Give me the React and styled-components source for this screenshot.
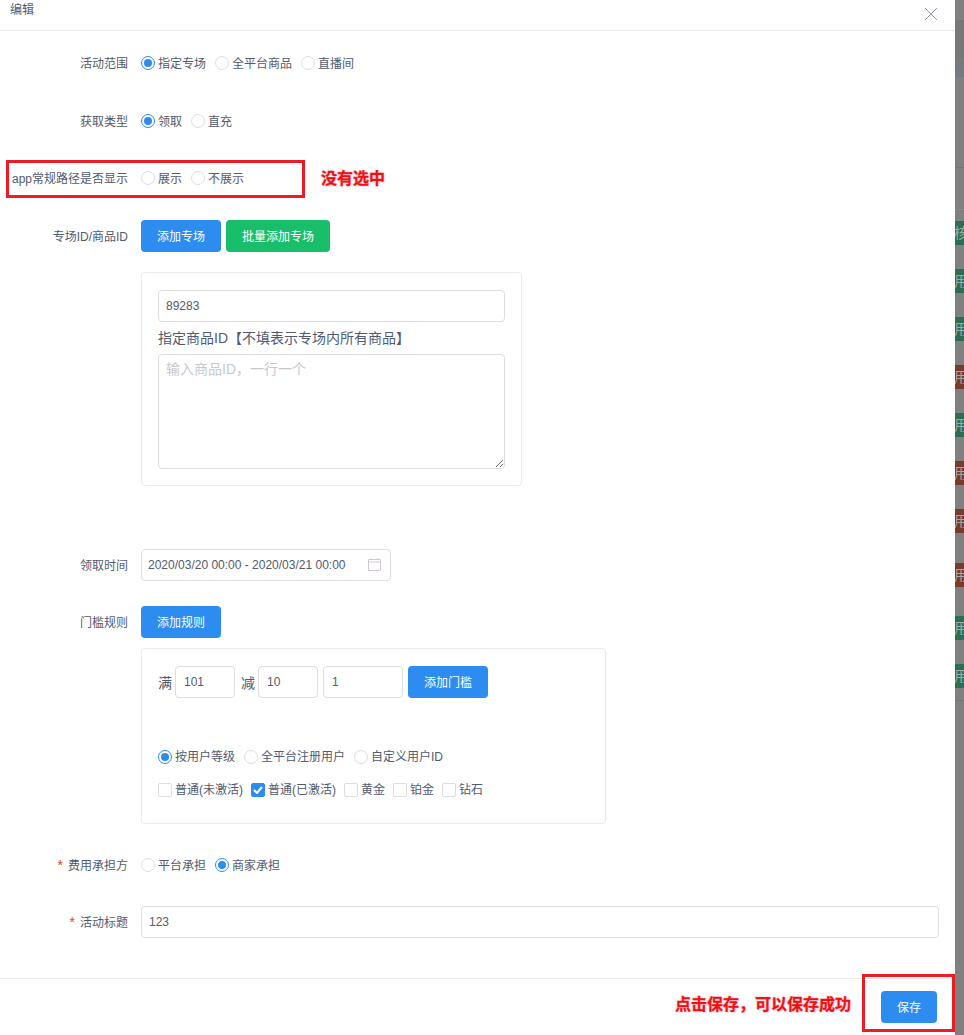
import styled, { createGlobalStyle } from "styled-components";

const stripTags = [
  { text: "核", color: "#2c6e4f", top: 48 },
  { text: "用", color: "#2c6e4f", top: 24 },
  { text: "用", color: "#2c6e4f", top: 24 },
  { text: "用", color: "#7c3a29", top: 24 },
  { text: "用", color: "#2c6e4f", top: 24 },
  { text: "用", color: "#7c3a29", top: 24 },
  { text: "用", color: "#7c3a29", top: 24 },
  { text: "用", color: "#7c3a29", top: 30 },
  { text: "用", color: "#2c6e4f", top: 29 },
  { text: "用", color: "#2c6e4f", top: 24 },
];

function Radio({ label, checked }) {
  return (
    <RadioLabel>
      <RadioDot $checked={checked} />
      <OptionText>{label}</OptionText>
    </RadioLabel>
  );
}

function Check({ label, checked }) {
  return (
    <RadioLabel>
      <CheckBox $checked={checked}>
        {checked && (
          <svg width="10" height="8" viewBox="0 0 10 8">
            <path d="M1 4l3 3 5-6" fill="none" stroke="#fff" strokeWidth="2" />
          </svg>
        )}
      </CheckBox>
      <OptionText>{label}</OptionText>
    </RadioLabel>
  );
}

export default function App() {
  return (
    <Page>
      <GlobalStyle />
      <Modal>
        <Header>
          <Title>编辑</Title>
          <CloseIcon width="14" height="14" viewBox="0 0 14 14">
            <path d="M1 1l12 12M13 1L1 13" stroke="#8b98a8" strokeWidth="1" fill="none" />
          </CloseIcon>
        </Header>
        <Body>
          <Row $top={16}>
            <Label>活动范围</Label>
            <Radios>
              <Radio label="指定专场" checked />
              <Radio label="全平台商品" />
              <Radio label="直播间" />
            </Radios>
          </Row>
          <Row $top={26}>
            <Label>获取类型</Label>
            <Radios>
              <Radio label="领取" checked />
              <Radio label="直充" />
            </Radios>
          </Row>
          <Row $top={25}>
            <Label>app常规路径是否显示</Label>
            <Radios>
              <Radio label="展示" />
              <Radio label="不展示" />
            </Radios>
          </Row>
          <Row $top={26}>
            <Label>专场ID/商品ID</Label>
            <ButtonRow>
              <Button>添加专场</Button>
              <Button $green>批量添加专场</Button>
            </ButtonRow>
          </Row>
          <Card $width={381} $top={20} $pad="17px 16px 16px">
            <TextInput defaultValue="89283" />
            <CardLabel>指定商品ID【不填表示专场内所有商品】</CardLabel>
            <TextArea placeholder="输入商品ID，一行一个" />
          </Card>
          <Row $top={63}>
            <Label>领取时间</Label>
            <DateBox>
              <span>2020/03/20 00:00 - 2020/03/21 00:00</span>
              <svg width="13" height="13" viewBox="0 0 13 13">
                <path d="M.5 1.5h12v11H.5zM.5 4h12M3 0v2M10 0v2" fill="none" stroke="#cfc8ce" />
              </svg>
            </DateBox>
          </Row>
          <Row $top={25}>
            <Label>门槛规则</Label>
            <Button>添加规则</Button>
          </Row>
          <Card $width={465} $top={10} $pad="17px 16px 0">
            <ThresholdRow>
              <Unit>满</Unit>
              <SmallInput $width={60} defaultValue="101" />
              <Unit $left={1}>减</Unit>
              <SmallInput $width={60} defaultValue="10" />
              <SmallInput $width={80} defaultValue="1" />
              <Button>添加门槛</Button>
            </ThresholdRow>
            <UserRadios>
              <Radio label="按用户等级" checked />
              <Radio label="全平台注册用户" />
              <Radio label="自定义用户ID" />
            </UserRadios>
            <Checks>
              <Check label="普通(未激活)" />
              <Check label="普通(已激活)" checked />
              <Check label="黄金" />
              <Check label="铂金" />
              <Check label="钻石" />
            </Checks>
          </Card>
          <Row $top={25}>
            <Label $required>费用承担方</Label>
            <Radios>
              <Radio label="平台承担" />
              <Radio label="商家承担" checked />
            </Radios>
          </Row>
          <Row $top={25}>
            <Label $required>活动标题</Label>
            <TextInput defaultValue="123" />
          </Row>
        </Body>
        <Footer>
          <FooterNote>点击保存，可以保存成功</FooterNote>
          <Button $wide>保存</Button>
        </Footer>
        <RedBox $left={6} $top={160} $width={299} $height={38} />
        <FieldNote>没有选中</FieldNote>
        <RedBox $left={862} $top={974} $width={93} $height={58} />
      </Modal>
      <Backdrop>
        {stripTags.map((tag, index) => (
          <StripTag key={index} $color={tag.color} $top={tag.top}>
            {tag.text}
          </StripTag>
        ))}
      </Backdrop>
    </Page>
  );
}

const GlobalStyle = createGlobalStyle`
  html, body {
    margin: 0;
    padding: 0;
    background: #7f7f7f;
  }
  * {
    box-sizing: border-box;
  }
`;

const Page = styled.div`
  display: flex;
  width: 964px;
  height: 1035px;
  overflow: hidden;
  font-family: "Liberation Sans", "Noto Sans CJK SC", sans-serif;
  font-size: 12px;
  color: #515a6e;
`;

const Modal = styled.div`
  position: relative;
  display: flex;
  flex-direction: column;
  width: 955px;
  height: 1035px;
  background: #fff;
`;

const Header = styled.div`
  display: flex;
  justify-content: space-between;
  height: 31px;
  padding: 3px 17px 0 10px;
  border-bottom: 1px solid #e8eaec;
`;

const Title = styled.div`
  line-height: 14px;
`;

const CloseIcon = styled.svg`
  margin-top: 4px;
`;

const Body = styled.div`
  flex: 1;
  padding-right: 16px;
`;

const Row = styled.div`
  display: flex;
  align-items: center;
  height: 32px;
  margin-top: ${(p) => p.$top}px;
`;

const Label = styled.div`
  flex: none;
  width: 128px;
  margin-right: 13px;
  text-align: right;
  white-space: nowrap;
  position: relative;
  top: -1px;

  &::before {
    content: ${(p) => (p.$required ? '"*"' : "none")};
    margin-right: 5px;
    color: #ed4014;
    font-size: 14px;
  }
`;

const Radios = styled.div`
  display: flex;
  gap: 9px;
`;

const RadioLabel = styled.label`
  display: flex;
  align-items: center;
  gap: 3px;
  white-space: nowrap;
`;

const OptionText = styled.span`
  margin-top: -2px;
`;

const RadioDot = styled.span`
  position: relative;
  width: 14px;
  height: 14px;
  border-radius: 50%;
  border: 1px solid ${(p) => (p.$checked ? "#2d8cf0" : "#dcdee2")};
  background: #fff;

  &::after {
    content: ${(p) => (p.$checked ? '""' : "none")};
    position: absolute;
    inset: 2px;
    border-radius: 50%;
    background: #2d8cf0;
  }
`;

const ButtonRow = styled.div`
  display: flex;
  gap: 5px;
`;

const Button = styled.button`
  flex: none;
  width: ${(p) => (p.$wide ? "56px" : "auto")};
  height: 32px;
  padding: 0 16px 2px;
  border: 0;
  border-radius: 4px;
  background: ${(p) => (p.$green ? "#19be6b" : "#2d8cf0")};
  color: #fff;
  font: inherit;
  white-space: nowrap;
`;

const Card = styled.div`
  width: ${(p) => p.$width}px;
  margin: ${(p) => p.$top}px 0 0 141px;
  padding: ${(p) => p.$pad};
  border: 1px solid #e8eaec;
  border-radius: 4px;
`;

const TextInput = styled.input`
  display: block;
  width: 100%;
  height: 32px;
  padding: 4px 7px;
  border: 1px solid #dcdee2;
  border-radius: 4px;
  color: #515a6e;
  font: inherit;
  outline: none;
`;

const CardLabel = styled.div`
  margin-top: 7px;
  line-height: 18px;
  font-size: 14px;
`;

const TextArea = styled.textarea`
  display: block;
  width: 100%;
  height: 115px;
  margin-top: 7px;
  padding: 4px 7px;
  border: 1px solid #dcdee2;
  border-radius: 4px;
  color: #515a6e;
  font: inherit;
  font-size: 14px;
  line-height: 20px;
  outline: none;
  resize: vertical;

  &::placeholder {
    color: #c5c8ce;
  }
`;

const DateBox = styled.div`
  display: flex;
  align-items: center;
  justify-content: space-between;
  width: 250px;
  height: 32px;
  padding: 0 9px 1px 6px;
  border: 1px solid #dcdee2;
  border-radius: 4px;
`;

const ThresholdRow = styled.div`
  display: flex;
  align-items: center;
  gap: 5px;
`;

const Unit = styled.span`
  margin: 0 -2px 0 ${(p) => p.$left || 0}px;
  font-size: 14px;
`;

const SmallInput = styled(TextInput)`
  flex: none;
  width: ${(p) => p.$width}px;
  padding-left: 8px;
`;

const UserRadios = styled(Radios)`
  margin-top: 51px;
`;

const Checks = styled.div`
  display: flex;
  gap: 8px;
  margin-top: 18px;
  padding-bottom: 26px;
`;

const CheckBox = styled.span`
  display: flex;
  align-items: center;
  justify-content: center;
  width: 14px;
  height: 14px;
  border: 1px solid ${(p) => (p.$checked ? "#2d8cf0" : "#dcdee2")};
  border-radius: 2px;
  background: ${(p) => (p.$checked ? "#2d8cf0" : "#fff")};
`;

const Footer = styled.div`
  display: flex;
  align-items: center;
  justify-content: flex-end;
  gap: 30px;
  height: 57px;
  padding-right: 18px;
  border-top: 1px solid #e8eaec;
`;

const annotation = `
  color: #f01010;
  font-size: 16px;
  font-weight: 700;
  line-height: 18px;
  text-shadow: 0 0 2px #fff, 1px 1px 2px #d8c8e8, -1px -1px 2px #e8d8d8;
  -webkit-text-stroke: 0.3px #f01010;
  white-space: nowrap;
`;

const FooterNote = styled.div`
  ${annotation}
  margin-bottom: 4px;
`;

const FieldNote = styled.div`
  ${annotation}
  position: absolute;
  left: 321px;
  top: 170px;
`;

const RedBox = styled.div`
  position: absolute;
  left: ${(p) => p.$left}px;
  top: ${(p) => p.$top}px;
  width: ${(p) => p.$width}px;
  height: ${(p) => p.$height}px;
  border: 3px solid #ed1c24;
  pointer-events: none;
`;

// dimmed table behind the modal, only a sliver of it is visible
const Backdrop = styled.div`
  flex: none;
  width: 9px;
  height: 1035px;
  padding-top: 173px;
  overflow: hidden;
  background:
    linear-gradient(
      #808080 0 20px,
      #777 20px 58px,
      #767a80 58px 77px,
      #808080 77px 167px,
      #747474 167px 168px,
      #808080 168px 209px,
      #8a8a8a 209px 210px,
      #808080 210px 700px,
      #747474 700px 701px,
      #808080 701px
    );
`;

const StripTag = styled.div`
  width: 30px;
  height: 24px;
  margin-top: ${(p) => p.$top}px;
  margin-left: -1px;
  background: ${(p) => p.$color};
  color: #a4a9a6;
  font-size: 14px;
  line-height: 24px;
  white-space: nowrap;
`;
